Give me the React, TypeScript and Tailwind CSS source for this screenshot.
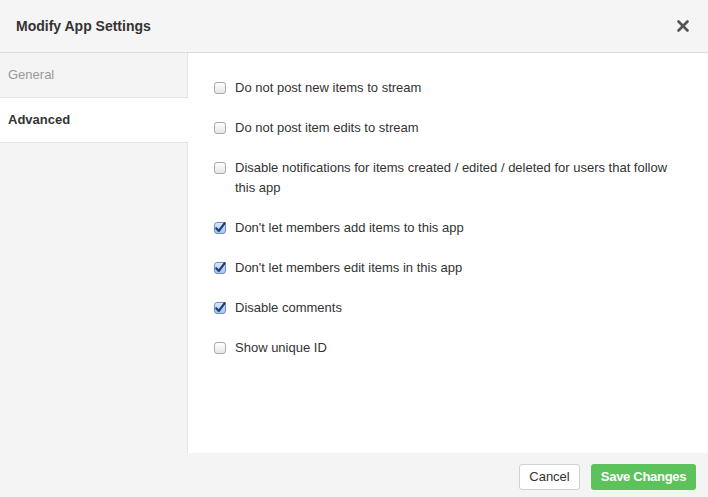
import { X } from 'lucide-react';

type Option = { label: string; checked: boolean };

const options: Option[] = [
  { label: 'Do not post new items to stream', checked: false },
  { label: 'Do not post item edits to stream', checked: false },
  {
    label: 'Disable notifications for items created / edited / deleted for users that follow this app',
    checked: false,
  },
  { label: "Don't let members add items to this app", checked: true },
  { label: "Don't let members edit items in this app", checked: true },
  { label: 'Disable comments', checked: true },
  { label: 'Show unique ID', checked: false },
];

function Checkbox({ checked }: { checked: boolean }) {
  if (checked) {
    return (
      <span className="mt-[4px] flex h-[12px] w-[12px] shrink-0 items-center justify-center rounded-[3px] border border-[#6f8fc0] bg-gradient-to-b from-[#dbe8fb] to-[#a9c4ee]">
        <svg viewBox="0 0 12 12" className="h-[12px] w-[12px] overflow-visible">
          <path d="M2.2 6.2 L4.8 9 L10.8 1" fill="none" stroke="#1d3f78" strokeWidth="2.1" strokeLinecap="round" strokeLinejoin="round" />
        </svg>
      </span>
    );
  }
  return (
    <span className="mt-[4px] h-[12px] w-[12px] shrink-0 rounded-[3px] border border-[#a9a9a9] bg-gradient-to-b from-white to-[#e6e6e6]" />
  );
}

export default function App() {
  return (
    <div className="flex h-[497px] w-[708px] flex-col bg-white text-[13px] text-[#333] [font-family:'Liberation_Sans',Arial,sans-serif]">
      <div className="flex h-[53px] shrink-0 items-center justify-between border-b border-[#dcdcdc] bg-[#f5f5f5] pl-4 pr-[16px]">
        <h1 className="text-[14px] font-bold text-[#333]">Modify App Settings</h1>
        <X className="h-[18px] w-[18px] text-[#555]" strokeWidth={3.6} />
      </div>

      <div className="flex min-h-0 flex-1">
        <div className="flex w-[188px] shrink-0 flex-col bg-[#f4f4f4]">
          <div className="flex h-[45px] items-center border-b border-r border-[#e4e4e4] px-2 text-[#999]">General</div>
          <div className="flex h-[45px] items-center border-b border-[#e4e4e4] bg-white px-2 font-bold text-[#333]">
            Advanced
          </div>
          <div className="flex-1 border-r border-[#e4e4e4]" />
        </div>

        <div className="flex flex-1 flex-col gap-5 pl-[26px] pr-8 pt-[25px]">
          {options.map((o) => (
            <label key={o.label} className="flex gap-[9px] leading-[20px]">
              <Checkbox checked={o.checked} />
              <span>{o.label}</span>
            </label>
          ))}
        </div>
      </div>

      <div className="flex h-[44px] shrink-0 items-start justify-end gap-[11px] bg-[#f4f4f4] pr-[12px] pt-[11px]">
        <button className="h-[26px] w-[61px] rounded-[3px] border border-[#d2d2d2] bg-white text-[13px] text-[#333]">
          Cancel
        </button>
        <button className="h-[26px] w-[105px] rounded-[3px] bg-[#5cc35c] text-[13px] font-bold tracking-[-0.3px] text-white">
          Save Changes
        </button>
      </div>
    </div>
  );
}
